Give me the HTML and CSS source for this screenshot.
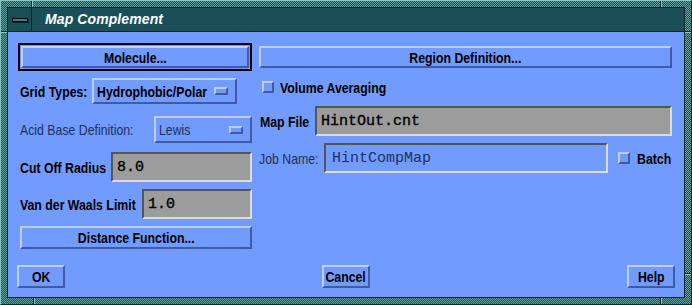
FILE: index.html
```html
<!DOCTYPE html>
<html>
<head>
<meta charset="utf-8">
<link rel="stylesheet" href="styles.css">
</head>
<body>
<div class="window">
  <div class="inner">
    <div class="titlebar">
      <div class="menu-btn"><span class="dash"></span></div>
      <div class="title">Map Complement</div>
    </div>
    <div class="content">
      <div class="columns">
        <div class="col-left">
          <div class="default-ring"><div class="btn btn-main"><span class="t tc">Molecule...</span></div></div>
          <div class="row row-grid">
            <span class="label lw-grid"><span class="t">Grid Types:</span></span>
            <div class="option opt-grid"><span class="opt-text"><span class="t">Hydrophobic/Polar</span></span><span class="ind"></span></div>
          </div>
          <div class="row row-acid">
            <span class="label lw-acid"><span class="t grey">Acid Base Definition:</span></span>
            <div class="option opt-acid"><span class="opt-text"><span class="t grey">Lewis</span></span><span class="ind"></span></div>
          </div>
          <div class="row row-cut">
            <span class="label lw-cut"><span class="t">Cut Off Radius</span></span>
            <div class="field"><span class="mono">8.0</span></div>
          </div>
          <div class="row row-vdw">
            <span class="label lw-vdw"><span class="t">Van der Waals Limit</span></span>
            <div class="field"><span class="mono">1.0</span></div>
          </div>
          <div class="btn btn-dist"><span class="t tc">Distance Function...</span></div>
        </div>
        <div class="col-right">
          <div class="btn btn-region"><span class="t tc">Region Definition...</span></div>
          <div class="row row-vol">
            <span class="check"></span>
            <span class="label"><span class="t">Volume Averaging</span></span>
          </div>
          <div class="row row-map">
            <span class="label lw-map"><span class="t">Map File</span></span>
            <div class="field"><span class="mono">HintOut.cnt</span></div>
          </div>
          <div class="row row-job">
            <span class="label lw-job"><span class="t grey">Job Name:</span></span>
            <div class="field field-off"><span class="mono grey">HintCompMap</span></div>
            <span class="check check-batch"></span>
            <span class="label lw-batch"><span class="t">Batch</span></span>
          </div>
        </div>
      </div>
      <div class="actions">
        <div class="btn btn-act"><span class="t tc">OK</span></div>
        <div class="btn btn-act"><span class="t tc">Cancel</span></div>
        <div class="btn btn-act"><span class="t tc">Help</span></div>
      </div>
    </div>
  </div>
</div>
</body>
</html>
```

FILE: styles.css
```css
* { box-sizing: border-box; margin: 0; padding: 0; }
html, body { width: 692px; height: 305px; overflow: hidden; }
body {
  background: #2d6666;
  font-family: "Liberation Sans", Arial, sans-serif;
  font-weight: bold;
  font-size: 15px;
  color: #000;
}

.window {
  width: 692px;
  height: 305px;
  background:
    linear-gradient(#0c2a2c, #0c2a2c) 30px 0 / 1px 6px no-repeat,
    linear-gradient(#8cc4c4, #8cc4c4) 31px 0 / 1px 6px no-repeat,
    linear-gradient(#0c2a2c, #0c2a2c) 659px 0 / 1px 6px no-repeat,
    linear-gradient(#8cc4c4, #8cc4c4) 660px 0 / 1px 6px no-repeat,
    linear-gradient(#0c2a2c, #0c2a2c) 0 30px / 6px 1px no-repeat,
    linear-gradient(#8cc4c4, #8cc4c4) 0 31px / 6px 1px no-repeat,
    linear-gradient(#0c2a2c, #0c2a2c) 684px 30px / 6px 1px no-repeat,
    linear-gradient(#8cc4c4, #8cc4c4) 684px 31px / 6px 1px no-repeat,
    linear-gradient(#0c2a2c, #0c2a2c) 684px 272px / 6px 1px no-repeat,
    linear-gradient(#8cc4c4, #8cc4c4) 684px 273px / 6px 1px no-repeat,
    linear-gradient(#0c2a2c, #0c2a2c) 32px 297px / 1px 6px no-repeat,
    linear-gradient(#8cc4c4, #8cc4c4) 33px 297px / 1px 6px no-repeat,
    linear-gradient(#0c2a2c, #0c2a2c) 659px 297px / 1px 6px no-repeat,
    linear-gradient(#8cc4c4, #8cc4c4) 660px 297px / 1px 6px no-repeat,
    repeating-conic-gradient(#1e5454 0 25%, #62a0a0 0 50%) 0 0 / 2px 2px;
  border-top: 1px solid #8cc4c4;
  border-left: 1px solid #8cc4c4;
  border-right: 1px solid #0c2a2c;
  border-bottom: 1px solid #0c2a2c;
  padding: 6px;
}

.inner {
  height: 100%;
  border: 1px solid #0c2a2c;
  display: flex;
  flex-direction: column;
}

.titlebar {
  flex: none;
  height: 24px;
  display: flex;
  background: #1a4f57;
  border-bottom: 1px solid #0a2426;
}
.menu-btn {
  width: 24px;
  border-right: 1px solid #0a2426;
  display: flex;
  align-items: center;
  justify-content: center;
}
.dash {
  width: 16px;
  height: 4px;
  border: 1px solid #000;
  background: #3f7c7c;
  box-shadow: 1px 1px 0 #0a2426;
}
.title {
  color: #fff;
  font-family: "Liberation Sans", sans-serif;
  font-style: italic;
  font-weight: bold;
  font-size: 14px;
  letter-spacing: 0.1px;
  line-height: 23px;
  margin-left: 13px;
}

.content {
  flex: 1;
  background: #729bff;
  display: flex;
  flex-direction: column;
  padding: 11px 9px 9px 9px;
}

.columns {
  display: flex;
  gap: 7px;
  margin-left: 1px;
}
.col-left { width: 234px; display: flex; flex-direction: column; }
.col-right { width: 413px; display: flex; flex-direction: column; padding-top: 3px; }

/* condensed look of the bitmap helvetica */
.t {
  display: inline-block;
  white-space: nowrap;
  transform: scaleX(0.82);
  transform-origin: 0 50%;
}
.tc { transform-origin: 50% 50%; }

.btn {
  display: flex;
  align-items: center;
  justify-content: center;
  background: #729bff;
  border: 2px solid;
  border-color: #bccfff #3f5ba3 #3f5ba3 #bccfff;
  white-space: nowrap;
}

.default-ring {
  border: 2px solid #000;
  padding: 1px;
  height: 28px;
}
.btn-main { height: 22px; }

.row { display: flex; align-items: center; white-space: nowrap; }
.col-left .row { margin-left: 2px; }

.label { flex: none; display: flex; align-items: center; }
.lw-grid { width: 72px; }
.lw-acid { width: 134px; }
.lw-cut { width: 91px; }
.lw-vdw { width: 122px; }
.lw-map { width: 55px; }
.lw-job { width: 65px; }
.lw-batch { width: 40px; }

.row-grid { margin-top: 7px; height: 26px; }
.row-acid { margin-top: 12px; height: 27px; }
.row-cut { margin-top: 9px; height: 30px; }
.row-vdw { margin-top: 7px; height: 30px; }
.btn-dist { margin-top: 7px; margin-left: 2px; height: 23px; }

.option {
  height: 100%;
  display: flex;
  align-items: center;
  border: 2px solid;
  border-color: #bccfff #3f5ba3 #3f5ba3 #bccfff;
}
.opt-grid { width: 145px; padding: 0 7px 0 3px; }
.opt-acid { flex: 1; padding: 0 7px 0 3px; }
.opt-text { flex: 1; min-width: 0; display: flex; }
.ind {
  flex: none;
  width: 14px;
  height: 8px;
  border: 2px solid;
  border-color: #bccfff #3f5ba3 #3f5ba3 #bccfff;
}

.field {
  flex: 1;
  height: 100%;
  display: flex;
  align-items: center;
  background: #9c9c9c;
  border: 2px solid;
  border-color: #555 #dcdcdc #dcdcdc #555;
  padding-left: 4px;
}
.field-off { background: transparent; flex: none; width: 284px; padding-left: 6px; }

.mono {
  font-family: "Liberation Mono", "DejaVu Sans Mono", monospace;
  font-weight: normal;
  -webkit-text-stroke: 0.35px #000;
  font-size: 15px;
}

.grey {
  color: #213058;
  font-weight: normal;
}
.mono.grey { -webkit-text-stroke: 0; }

.btn-region { height: 22px; }
.row-vol { margin-top: 10px; height: 18px; margin-left: 3px; }
.check {
  flex: none;
  width: 12px;
  height: 12px;
  border: 2px solid;
  border-color: #bccfff #3f5ba3 #3f5ba3 #bccfff;
  margin-right: 6px;
}
.row-map { margin-top: 10px; height: 30px; margin-left: 1px; }
.row-job { margin-top: 7px; height: 30px; }
.check-batch { margin-left: 10px; margin-right: 7px; }

.actions {
  margin-top: auto;
  display: flex;
  justify-content: space-between;
}
.btn-act { width: 48px; height: 23px; }
```
